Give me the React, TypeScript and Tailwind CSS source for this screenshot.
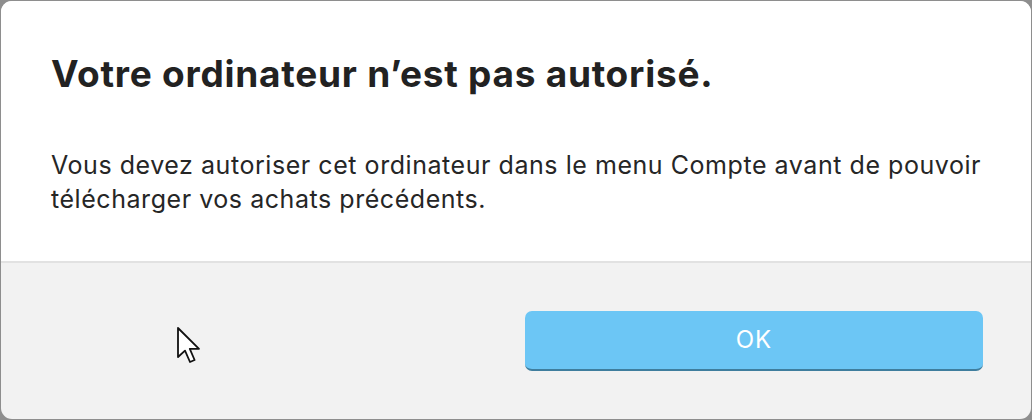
import React from "react";

function Cursor() {
  return (
    <svg
      className="absolute left-[176px] top-[326px]"
      width="28"
      height="40"
      viewBox="0 0 14 20"
    >
      <path
        d="M1 1 L1 15.5 L4.5 12.3 L7 18 L9.3 17 L6.9 11.4 L11.5 11.4 Z"
        fill="#fff"
        stroke="#111"
        strokeWidth="0.9"
        strokeLinejoin="round"
      />
    </svg>
  );
}

export default function App() {
  return (
    <div className="relative h-[420px] w-[1032px] bg-[#8e8e8e] p-px font-['Inter',sans-serif]">
      <div className="flex h-full flex-col overflow-hidden rounded-[11px] bg-[#f2f2f2]">
        <div className="h-[260px] bg-white pl-[50px] pt-[51px]">
          <h1 className="text-[37px] font-bold leading-[44px] tracking-[0.75px] text-[#222]">
            Votre ordinateur n’est pas autorisé.
          </h1>
          <p className="mt-[52px] whitespace-nowrap text-[25px] leading-[34px] tracking-[0.55px] text-[#262626]">
            Vous devez autoriser cet ordinateur dans le menu Compte avant de pouvoir
            <br />
            télécharger vos achats précédents.
          </p>
        </div>
        <div className="h-[2px] bg-[#e2e2e2]" />
        <div className="flex flex-1 items-start justify-end pr-[48px] pt-[48px]">
          <button className="h-[60px] w-[458px] rounded-[7px] border-b-2 border-[#3f7e9e] bg-[#6cc6f5] text-[24px] tracking-[1px] text-white">
            OK
          </button>
        </div>
      </div>
      <Cursor />
    </div>
  );
}
